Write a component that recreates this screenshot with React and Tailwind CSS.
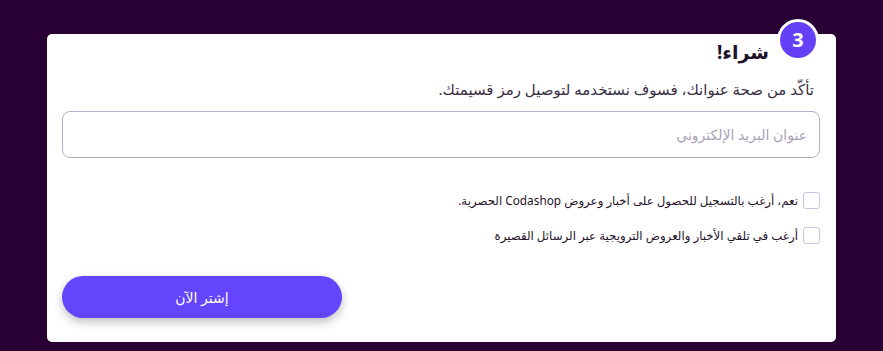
import React from 'react';

export default function App() {
  return (
    <div className="min-h-[351px] w-full bg-[#280033] px-[47px] pt-[34px] pb-[10px]" style={{ fontFamily: '"Noto Sans", "DejaVu Sans", sans-serif' }}>
      <div dir="rtl" className="relative rounded-[5px] bg-white pt-[4px] pr-4 pl-[15px] pb-[24px]">
        {/* Step badge */}
        <div className="absolute right-[17px] -top-[15px] flex h-[42px] w-[42px] items-center justify-center rounded-full border-[3px] border-white bg-[#6441f7] text-[20px] font-bold text-white">
          3
        </div>

        <h2 className="pr-[51px] text-[19px] font-bold leading-7 text-[#1f1329]">شراء!</h2>

        <p className="mt-[13px] pr-[6px] text-[15px] leading-5 text-[#3a2f45]">
          تأكّد من صحة عنوانك، فسوف نستخدمه لتوصيل رمز قسيمتك.
        </p>

        <input
          type="email"
          placeholder="عنوان البريد الإلكتروني"
          className="mt-[12px] h-[47px] w-full rounded-lg border border-[#b7afcb] px-3 text-[14px] text-[#2a1a3a] outline-none placeholder:text-[#aaa2bb]"
        />

        <div className="mt-[34px] flex flex-col gap-[18px]">
          {[
            'نعم، أرغب بالتسجيل للحصول على أخبار وعروض Codashop الحصرية.',
            'أرغب في تلقي الأخبار والعروض الترويجية عبر الرسائل القصيرة',
          ].map((label) => (
            <label key={label} className="flex items-center gap-[5px] text-[11.8px] leading-[17px] text-[#1f1329]">
              <span className="h-[17px] w-[17px] shrink-0 rounded-[3px] border border-[#cbc2ec] bg-white" />
              {label}
            </label>
          ))}
        </div>

        <div className="mt-[32px] flex justify-end">
          <button className="h-[42px] w-[280px] rounded-full bg-[#6445fc] text-[14px] text-white shadow-[0_4px_10px_rgba(0,0,0,0.25)]">
            إشتر الآن
          </button>
        </div>
      </div>
    </div>
  );
}
